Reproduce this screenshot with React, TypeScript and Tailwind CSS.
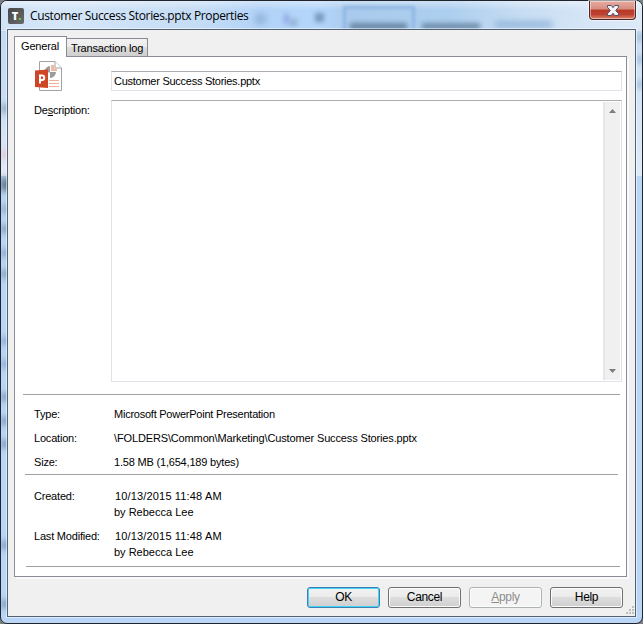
import { useState } from 'react'
import type { ReactNode } from 'react'

const edgeShadows = [
  { top: 103, height: 9, className: 'bg-[#90a9c0]' },
  { top: 149, height: 8, className: 'bg-[#e0c5d0]' },
  { top: 177, height: 13, className: 'bg-[#5d7187]' },
  { top: 204, height: 8, className: 'bg-[#8eabca]' },
  { top: 224, height: 8, className: 'bg-[#7f9cbb]' },
  { top: 248, height: 8, className: 'bg-[#8aa4cb]' },
  { top: 269, height: 8, className: 'bg-[#7f9cbb]' },
  { top: 336, height: 8, className: 'bg-[#86a9d2]' },
  { top: 359, height: 8, className: 'bg-[#86a9d2]' },
  { top: 392, height: 8, className: 'bg-[#7898bd]' },
  { top: 416, height: 8, className: 'bg-[#7898bd]' },
  { top: 439, height: 8, className: 'bg-[#7898bd]' },
  { top: 540, height: 8, className: 'bg-[#7898bd]' },
  { top: 599, height: 8, className: 'bg-[#7898bd]' },
]

const rightShadows = [
  { top: 32, height: 9 },
  { top: 54, height: 9 },
  { top: 79, height: 9 },
]

// Blurred content of the window behind the glass frame
function Glass() {
  return (
    <div className="pointer-events-none absolute inset-0 overflow-hidden rounded-[6px]">
      <div className="absolute inset-x-0 top-0 h-[30px] bg-[linear-gradient(90deg,#cfe2f6_0px,#d5e6f8_60px,#c4dcf5_200px,#b2d3f7_260px,#b4d6fb_320px,#a9caec_350px,#adcfef_450px,#c7ddf3_520px,#d8e7f7_600px,#dceaf8_640px)]" />
      <div className="absolute inset-x-0 top-0 h-[9px] bg-linear-to-b from-white/40 to-transparent" />
      <div className="absolute top-[30px] left-0 h-[145px] w-[8px] bg-linear-to-b from-[#c3daf2] via-[#c9def4] to-[#e5e9f4]" />
      <div className="absolute top-[30px] right-0 h-[145px] w-[8px] bg-linear-to-b from-[#c9def4] to-[#dcebfa]" />
      {edgeShadows.map((s) => (
        <div
          key={s.top}
          className={`absolute left-0 w-[9px] blur-[3px] ${s.className}`}
          style={{ top: s.top, height: s.height }}
        />
      ))}
      {rightShadows.map((s) => (
        <div
          key={s.top}
          className="absolute right-0 w-[5px] bg-[#a3bfdc] blur-[2px]"
          style={{ top: s.top, height: s.height }}
        />
      ))}
      <div className="absolute top-[13px] left-[254px] h-[10px] w-[11px] bg-[#86a9ce] opacity-70 blur-[3px]" />
      <div className="absolute top-[13px] left-[283px] h-[10px] w-[5px] bg-[#8592d8] opacity-70 blur-[2.5px]" />
      <div className="absolute top-[18px] left-[289px] h-[7px] w-[7px] bg-[#86a5c8] opacity-80 blur-[2.5px]" />
      <div className="absolute top-[12px] left-[314px] h-[9px] w-[9px] bg-[#6686ac] opacity-80 blur-[2.5px]" />
      <div className="absolute top-[5px] left-[342px] h-[28px] w-[72px] border-3 border-[#8db5e4] blur-[1.5px]" />
      <div className="absolute top-[22px] left-[349px] h-[7px] w-[57px] bg-[#62809e] opacity-90 blur-[2.5px]" />
      <div className="absolute top-[22px] left-[421px] h-[7px] w-[58px] bg-[#6b88a5] opacity-90 blur-[2.5px]" />
      <div className="absolute top-[20px] left-[494px] h-[7px] w-[57px] bg-[#8aaed6] opacity-80 blur-[3px]" />
    </div>
  )
}

function CloseButton() {
  return (
    <button
      aria-label="Close"
      className="mr-[5px] flex h-[19px] w-[47px] items-center justify-center self-start rounded-b-[4px] border border-t-0 border-[#4d2528] bg-[linear-gradient(180deg,#e6aca1_0%,#d98c80_45%,#b93824_50%,#bd4231_75%,#dc8468_100%)] shadow-[0_0_0_1px_#ffffff90,inset_0_0_0_1px_#ffffff70]"
    >
      <svg width="12" height="11" viewBox="0 0 12 11">
        <path
          d="M.5.5h3.700L6 2.700 7.800.5h3.700v1.700L8.700 5.500l2.800 3.100v1.900H7.800L6 8.300 4.200 10.500H.5V8.600l2.800-3.100L.5 2.200z"
          fill="#f5f5f7"
          stroke="#4e5266"
        />
      </svg>
    </button>
  )
}

function TitleBar() {
  return (
    <div className="relative flex h-[28px] items-center">
      <div className="mt-[1px] ml-[6px] flex h-[16px] w-[16px] items-center justify-center rounded-[2px] bg-linear-to-br from-[#474747] to-[#6a6a6a] pl-px font-['Open_Sans',sans-serif] text-[11px] leading-none font-extrabold text-white">
        T<span className="text-[#5fd83c]">.</span>
      </div>
      <h1 className="mt-px ml-[6px] flex-1 font-['Open_Sans',sans-serif] text-[12px] leading-[16px] tracking-[-0.36px] whitespace-nowrap text-black">
        Customer Success Stories.pptx Properties
      </h1>
      <CloseButton />
    </div>
  )
}

function PowerPointIcon() {
  return (
    <svg width="28" height="31" viewBox="0 0 28 31" className="shrink-0">
      <path d="M4.5.5h15.500l6.500 6.500v22.500h-22z" fill="#fff" stroke="#a2a2a2" />
      <path d="M20 .5V7h6.500" fill="#fff" stroke="#a2a2a2" />
      <path d="M15 5v6h6a6 6 0 0 1-6 6v-5.500L9.500 11A6 6 0 0 1 15 5z" fill="#9c9c9c" />
      <path d="M16 4h3v3.500h3V10h-6z" fill="#f3b79f" />
      <path d="M14 19.500h10M14 22.500h10M14 25.500h10" stroke="#f2b196" />
      <path d="M0 9.500 13 8.500v18.500L0 26z" fill="#d04525" />
      <path
        d="M5 22.500v-8h2a2 2 0 0 1 0 4.500H5"
        fill="none"
        stroke="#fff"
        strokeWidth="2"
      />
    </svg>
  )
}

function Row({ label, children }: { label: string; children: ReactNode }) {
  return (
    <div className="flex">
      <span className="w-[80px] shrink-0 tracking-[-0.2px]">{label}</span>
      <span className="whitespace-nowrap">{children}</span>
    </div>
  )
}

function ScrollBar() {
  return (
    <div className="my-px mr-px flex w-[17px] flex-col items-center justify-between border-l-2 border-[#e6e6e6] bg-[#f0f0f0] py-[7px]">
      <svg width="7" height="4" viewBox="0 0 7 4">
        <path d="M3.500 0 7 4H0z" fill="#7d7d7d" />
      </svg>
      <svg width="7" height="4" viewBox="0 0 7 4">
        <path d="M0 0h7L3.500 4z" fill="#7d7d7d" />
      </svg>
    </div>
  )
}

function GeneralPage() {
  const [name, setName] = useState('Customer Success Stories.pptx')

  return (
    <div className="flex h-[521px] w-[613px] flex-col border border-[#898c95] bg-white shadow-[2px_2px_0_#fafafa]">
      <div className="flex pt-[4px] pl-[20px]">
        <div className="w-[76px]">
          <PowerPointIcon />
        </div>
        <input
          value={name}
          onChange={(e) => setName(e.target.value)}
          className="mt-[10px] h-[20px] w-[511px] border border-[#e2e3ea] border-t-[#abadb3] px-[2px] tracking-[-0.26px] outline-none"
        />
      </div>
      <div className="mt-[8px] flex pl-[19px]">
        <label className="w-[77px] pt-[2px] leading-[16px] tracking-[-0.2px]">
          De<u>s</u>cription:
        </label>
        <div className="flex h-[282px] w-[511px] justify-end border border-[#e2e3ea] border-t-[#abadb3]">
          <ScrollBar />
        </div>
      </div>
      <hr className="mt-[12px] ml-[8px] w-[597px] border-[#a0a0a0]" />
      <div className="mt-[11px] flex flex-col gap-[8px] pl-[19px] leading-[16px]">
        <Row label="Type:">
          <span className="tracking-[-0.24px]">
            Microsoft PowerPoint Presentation
          </span>
        </Row>
        <Row label="Location:">
          <span className="tracking-[-0.14px]">
            \FOLDERS\Common\Marketing\Customer Success Stories.pptx
          </span>
        </Row>
        <Row label="Size:">
          <span className="tracking-[-0.19px]">1.58 MB (1,654,189 bytes)</span>
        </Row>
      </div>
      <hr className="mt-[4px] ml-[10px] w-[593px] border-[#a0a0a0]" />
      <div className="mt-[13px] flex flex-col gap-[8px] pl-[19px] leading-[16px]">
        <Row label="Created:">
          <span className="ml-px tracking-[0.16px]">10/13/2015 11:48 AM</span>
          <br />
          by Rebecca Lee
        </Row>
        <Row label="Last Modified:">
          <span className="ml-px tracking-[0.16px]">10/13/2015 11:48 AM</span>
          <br />
          by Rebecca Lee
        </Row>
      </div>
      <hr className="mt-[6px] ml-[11px] w-[594px] border-[#a0a0a0]" />
    </div>
  )
}

const buttonBase =
  'h-[21px] w-[73px] rounded-[3px] border pb-px text-[12px] leading-none tracking-[-0.35px]'
const buttonNormal =
  'border-[#707070] bg-[linear-gradient(180deg,#f2f2f2_0%,#ebebeb_49%,#dddddd_50%,#cfcfcf_100%)] shadow-[inset_0_0_0_1px_#fcfcfc]'

function App() {
  return (
    <div className="h-[624px] w-[643px] bg-[#7b7f84] font-['Liberation_Sans',sans-serif] text-[11px] text-black">
      <div className="relative flex h-[624px] w-[643px] flex-col rounded-[7px] border border-[#20242c] bg-[#b9d6f6]">
        <Glass />
        <div className="relative mx-px flex flex-1 flex-col">
          <TitleBar />
          <div className="mx-[5px] flex h-[588px] flex-col border border-[#536273] bg-[#f0f0f0] pl-[6px] shadow-[0_0_0_1px_#ffffff80]">
            <div className="flex h-[26px] items-end">
              <div className="relative z-10 mb-[-1px] h-[21px] w-[53px] border border-b-0 border-[#898c95] bg-white pl-[6px] leading-[18px] tracking-[-0.15px]">
                General
              </div>
              <div className="h-[18px] w-[81px] border border-b-0 border-l-0 border-[#898c95] bg-[linear-gradient(180deg,#f2f2f2_0%,#ebebeb_49%,#dddddd_50%,#cfcfcf_100%)] pl-[4px] leading-[19px] tracking-[-0.18px] whitespace-nowrap">
                Transaction log
              </div>
            </div>
            <GeneralPage />
            <div className="mt-[10px] flex items-start gap-[8px] pl-[293px]">
              <button
                className={`${buttonBase} border-[#3c7fb1] bg-[linear-gradient(180deg,#f2f2f2_0%,#ebebeb_49%,#dddddd_50%,#cfcfcf_100%)] shadow-[inset_0_0_0_1px_#46d3f8]`}
              >
                OK
              </button>
              <button className={`${buttonBase} ${buttonNormal}`}>Cancel</button>
              <button
                className={`${buttonBase} border-[#adb2b5] bg-[#f4f4f4] text-[#8d8d8d] shadow-[inset_0_0_0_1px_#fcfcfc]`}
              >
                <u>A</u>pply
              </button>
              <button className={`${buttonBase} ${buttonNormal}`}>Help</button>
            </div>
          </div>
        </div>
        <svg
          className="absolute right-[8px] bottom-[9px]"
          width="8"
          height="8"
          viewBox="0 0 8 8"
        >
          <path
            d="M6 0h2v2H6zM3 3h2v2H3zM6 3h2v2H6zM0 6h2v2H0zM3 6h2v2H3zM6 6h2v2H6z"
            fill="#bfbfbf"
          />
        </svg>
      </div>
    </div>
  )
}

export default App
